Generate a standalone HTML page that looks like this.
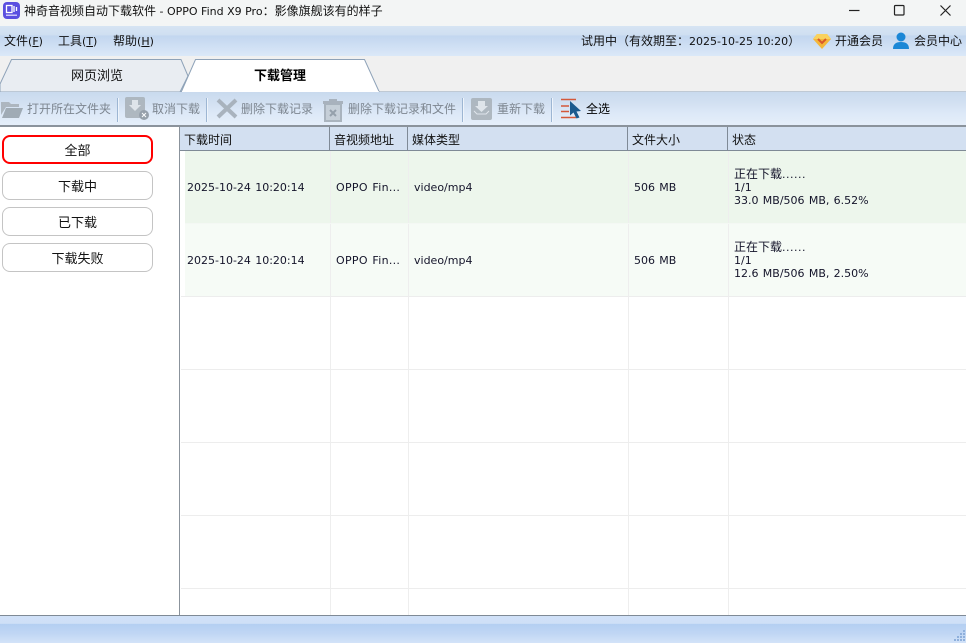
<!DOCTYPE html>
<html lang="zh"><head><meta charset="utf-8"><title>神奇音视频自动下载软件</title>
<style>
*{box-sizing:border-box;margin:0;padding:0}
html,body{width:966px;height:643px;overflow:hidden;background:#fff}
body{position:relative;font:12px/14px "Liberation Sans","Noto Sans CJK SC",sans-serif;color:#111}
.a,.t{position:absolute}
.t{white-space:nowrap}
i{font-style:normal;font-family:"DejaVu Sans",sans-serif;font-size:11px}
.g{color:#7d8690}
.tb{top:101px;line-height:16px;font-size:12px}
.ic{opacity:.9}
.sep{position:absolute;top:98px;width:1px;height:24px;background:#9db6d3;box-shadow:1px 0 0 #eef4fb}
.btn{position:absolute;left:2px;width:151px;height:29px;border:1px solid #c4c4c4;border-radius:8px;background:#fff;text-align:center;line-height:29px;font-size:13px}
.h{top:132px;font-size:12px;line-height:16px;color:#111}
.hl{position:absolute;top:127px;width:1px;height:24px;background:#7f8a96}
.vl{position:absolute;top:151px;width:1px;height:464px;background:#eeeeee}
.hr{position:absolute;left:181px;right:0;height:1px;background:#ededed}
.c{font-size:12px;line-height:14px;color:#14142a;word-spacing:.8px}
</style></head><body>
<div class="a" style="left:0;top:0;width:966px;height:26px;background:#f3f5f5"></div>
<svg class="a" style="left:3px;top:2px" width="17" height="17" viewBox="0 0 17 17"><rect width="17" height="17" rx="4" fill="#5a4fe0"/><rect x="3.500" y="3.500" width="5.500" height="7" fill="none" stroke="#fff" stroke-width="1.300"/><path d="M11 4v6M13.500 5v4" stroke="#fff" stroke-width="1.300"/><rect x="3" y="12.500" width="11" height="1.500" fill="#c9c4fa"/></svg>
<div class="t" style="left:24px;top:4px">神奇音视频自动下载软件<i> - OPPO Find X9 Pro</i>：影像旗舰该有的样子</div>
<svg class="a" style="left:846px;top:0" width="120" height="24" viewBox="0 0 120 24" fill="none" stroke="#222" stroke-width="1.200"><path d="M3 10.500h10.500"/><rect x="48.500" y="5.500" width="9.500" height="9.500" rx="1"/><path d="M94.500 5.500l10 10M104.500 5.500l-10 10"/></svg>

<div class="a" style="left:0;top:26px;width:966px;height:30px;background:linear-gradient(#d6e4f3 0,#cfdff1 30%,#c2d6ef 33%,#dbe8f8 100%)"></div>
<div class="t" style="left:4px;top:34px">文件<i>(<u>F</u>)</i></div>
<div class="t" style="left:58px;top:34px">工具<i>(<u>T</u>)</i></div>
<div class="t" style="left:113px;top:34px">帮助<i>(<u>H</u>)</i></div>
<div class="t" style="left:581px;top:34px">试用中（有效期至：<i>2025-10-25 10:20</i>）</div>
<svg class="a" style="left:813px;top:33px" width="18" height="16" viewBox="0 0 18 16"><path d="M4 1h10l4 5-9 10L0 6z" fill="#f4b73a"/><path d="M4 1h10l4 5H0z" fill="#f9d25e"/><path d="M5 6l4 4 4-4" fill="none" stroke="#d9582a" stroke-width="2"/></svg>
<div class="t" style="left:835px;top:34px">开通会员</div>
<svg class="a" style="left:892px;top:32px" width="18" height="17" viewBox="0 0 18 17" fill="#1b87d6"><circle cx="9" cy="5" r="4.500"/><path d="M1 17c0-5 3-7 8-7s8 2 8 7z"/></svg>
<div class="t" style="left:914px;top:34px">会员中心</div>

<div class="a" style="left:0;top:56px;width:966px;height:36px;background:#f0f0f0"></div>
<svg class="a" style="left:0;top:56px" width="966" height="37" viewBox="0 0 966 37"><path d="M0 36h966" stroke="#8ea2b8"/><path d="M0 28L11.500 3.500H181L188 20 180 36H0z" fill="#e9edf2" stroke="#8ea2b8"/><path d="M181 36.500L195.500 3.500H364.500L379.500 36.500z" fill="#fff" stroke="#8ea2b8"/><path d="M182 36h197" stroke="#fff" stroke-width="1.500"/></svg>
<div class="t" style="left:71px;top:69px;font-size:13px">网页浏览</div>
<div class="t" style="left:254px;top:69px;font-size:13px;font-weight:bold;color:#000">下载管理</div>

<div class="a" style="left:0;top:92px;width:966px;height:34px;background:linear-gradient(#c9daee 0,#d3e1f2 35%,#dce8f7 60%,#e6effa 100%)"></div>
<div class="a" style="left:0;top:125px;width:966px;height:2px;background:#8b939c"></div>
<svg class="a ic" style="left:1px;top:99px" width="22" height="20" viewBox="0 0 22 20" fill="#a9b2ba"><path d="M0 3h8l2 2h8v3H5L0 16z"/><path d="M5 9h17l-4 10H1z" fill="#9aa5ae"/></svg>
<div class="t g tb" style="left:27px">打开所在文件夹</div>
<div class="sep" style="left:117px"></div>
<svg class="a ic" style="left:125px;top:97px" width="24" height="24" viewBox="0 0 24 24"><rect width="20" height="21" rx="2" fill="#aab3bb"/><path d="M7 3h6v5h3l-6 6-6-6h3z" fill="#e0e5ea"/><circle cx="19" cy="18" r="5" fill="#8f99a3"/><path d="M17 16l4 4M21 16l-4 4" stroke="#fff"/></svg>
<div class="t g tb" style="left:152px">取消下载</div>
<div class="sep" style="left:206px"></div>
<svg class="a ic" style="left:216px;top:98px" width="22" height="21" viewBox="0 0 22 21"><path d="M2 2l18 17M20 2L2 19" stroke="#a4aeb8" stroke-width="4"/></svg>
<div class="t g tb" style="left:241px">删除下载记录</div>
<svg class="a ic" style="left:322px;top:97px" width="22" height="25" viewBox="0 0 22 25"><path d="M7 2h8v2H7zM1 4h20v3H1z" fill="#a4aeb8"/><path d="M3 7h16v17H3z" fill="#c4cdd5" stroke="#a4aeb8" stroke-width="2"/><path d="M8 13l6 6M14 13l-6 6" stroke="#8e99a3" stroke-width="2"/></svg>
<div class="t g tb" style="left:348px">删除下载记录和文件</div>
<div class="sep" style="left:462px"></div>
<svg class="a ic" style="left:471px;top:98px" width="21" height="22" viewBox="0 0 21 22"><rect width="21" height="22" rx="2" fill="#aab3bb"/><path d="M7 3h7v5h3l-6.500 6L4 8h3z" fill="#e0e5ea"/><path d="M3 13l3 3h9l3-3" fill="none" stroke="#e0e5ea"/></svg>
<div class="t g tb" style="left:497px">重新下载</div>
<div class="sep" style="left:551px"></div>
<svg class="a" style="left:560px;top:98px" width="22" height="22" viewBox="0 0 22 22"><path d="M1 1.500h15M1 8h8M1 13.500h8M1 19.500h15" stroke="#d4583a" stroke-width="1.500"/><path d="M10 3l11 10-4.500 .5 3 6-3 1-3-6-3.500 3z" fill="#1b5a8e"/></svg>
<div class="t tb" style="left:586px;color:#000">全选</div>

<div class="a" style="left:179px;top:127px;width:1px;height:488px;background:#8b939c"></div>
<div class="btn" style="top:135px;height:29px;border:2px solid #f00;line-height:27px">全部</div>
<div class="btn" style="top:171px">下载中</div>
<div class="btn" style="top:207px">已下载</div>
<div class="btn" style="top:243px">下载失败</div>

<div class="a" style="left:180px;top:127px;width:786px;height:23px;background:#d3e0f1"></div>
<div class="a" style="left:180px;top:150px;width:786px;height:1px;background:#7f8a96"></div>
<div class="hl" style="left:329px"></div><div class="hl" style="left:407px"></div><div class="hl" style="left:627px"></div><div class="hl" style="left:727px"></div>
<div class="t h" style="left:184px">下载时间</div>
<div class="t h" style="left:334px">音视频地址</div>
<div class="t h" style="left:412px">媒体类型</div>
<div class="t h" style="left:632px">文件大小</div>
<div class="t h" style="left:732px">状态</div>

<div class="a" style="left:185px;top:151px;width:781px;height:73px;background:#edf6ec"></div>
<div class="a" style="left:185px;top:224px;width:781px;height:72px;background:#f6fbf6"></div>
<div class="vl" style="left:330px"></div><div class="vl" style="left:408px"></div><div class="vl" style="left:628px"></div><div class="vl" style="left:728px"></div>
<div class="hr" style="top:223px;left:185px;background:#f4f8f4"></div>
<div class="hr" style="top:296px"></div><div class="hr" style="top:369px"></div><div class="hr" style="top:442px"></div><div class="hr" style="top:515px"></div><div class="hr" style="top:588px"></div>

<div class="t c" style="left:187px;top:180px"><i>2025-10-24 10:20:14</i></div>
<div class="t c" style="left:336px;top:180px"><i style="letter-spacing:.3px">OPPO Fin...</i></div>
<div class="t c" style="left:414px;top:180px"><i>video/mp4</i></div>
<div class="t c" style="left:634px;top:180px"><i>506 MB</i></div>
<div class="t c" style="left:734px;top:167px">正在下载<i style="letter-spacing:.5px">......</i></div>
<div class="t c" style="left:734px;top:180px"><i>1/1</i></div>
<div class="t c" style="left:734px;top:193px"><i>33.0 MB/506 MB, 6.52%</i></div>
<div class="t c" style="left:187px;top:253px"><i>2025-10-24 10:20:14</i></div>
<div class="t c" style="left:336px;top:253px"><i style="letter-spacing:.3px">OPPO Fin...</i></div>
<div class="t c" style="left:414px;top:253px"><i>video/mp4</i></div>
<div class="t c" style="left:634px;top:253px"><i>506 MB</i></div>
<div class="t c" style="left:734px;top:240px">正在下载<i style="letter-spacing:.5px">......</i></div>
<div class="t c" style="left:734px;top:253px"><i>1/1</i></div>
<div class="t c" style="left:734px;top:266px"><i>12.6 MB/506 MB, 2.50%</i></div>

<div class="a" style="left:0;top:615px;width:966px;height:1px;background:#7f8a96"></div>
<div class="a" style="left:0;top:616px;width:966px;height:27px;background:linear-gradient(#d0e1f8 0,#cfe0f7 28%,#b4cff2 30%,#c0d6f4 65%,#d3e3f8 100%)"></div>
<svg class="a" style="left:954px;top:629px" width="12" height="14" viewBox="0 0 12 14" fill="#8fb0dc"><rect x="9" y="1" width="2" height="2"/><rect x="6" y="4" width="2" height="2"/><rect x="9" y="4" width="2" height="2"/><rect x="3" y="7" width="2" height="2"/><rect x="6" y="7" width="2" height="2"/><rect x="9" y="7" width="2" height="2"/><rect x="0" y="10" width="2" height="2"/><rect x="3" y="10" width="2" height="2"/><rect x="6" y="10" width="2" height="2"/><rect x="9" y="10" width="2" height="2"/></svg>
</body></html>
